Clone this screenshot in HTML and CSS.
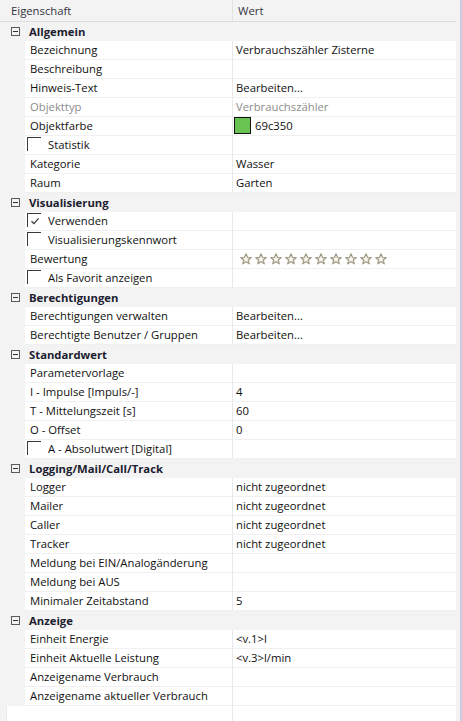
FILE: index.html
```html
<!DOCTYPE html>
<html lang="de">
<head>
<meta charset="utf-8">
<title>Eigenschaften</title>
<link rel="stylesheet" href="styles.css">
</head>
<body>
<svg width="0" height="0" class="defs">
  <defs>
    <linearGradient id="sg" x1="0" y1="0" x2="0" y2="1">
      <stop offset="0" stop-color="#f2efe6"/>
      <stop offset="1" stop-color="#cfc8b4"/>
    </linearGradient>
    <symbol id="star" viewBox="0 0 12 12">
      <polygon points="6,0.7 7.5,4.2 11.3,4.5 8.4,7 9.3,10.9 6,8.9 2.7,10.9 3.6,7 0.7,4.5 4.5,4.2" fill="url(#sg)" stroke="#9d9783" stroke-width="1.1" stroke-linejoin="round"/>
      <polygon points="6,3.6 6.8,5.4 8.6,5.6 7.2,6.8 7.7,8.6 6,7.6 4.3,8.6 4.8,6.8 3.4,5.6 5.2,5.4" fill="#fbfaf6"/>
    </symbol>
  </defs>
</svg>
<div class="window">
  <div class="panel">
    <div class="head">
      <div class="hcell hname">Eigenschaft</div>
      <div class="hcell hval">Wert</div>
    </div>

    <div class="cat"><span class="tog"></span><span class="ctext">Allgemein</span></div>
    <div class="row"><div class="gut"></div><div class="lab">Bezeichnung</div><div class="val">Verbrauchszähler Zisterne</div></div>
    <div class="row"><div class="gut"></div><div class="lab">Beschreibung</div><div class="val"></div></div>
    <div class="row"><div class="gut"></div><div class="lab">Hinweis-Text</div><div class="val">Bearbeiten...</div></div>
    <div class="row dis"><div class="gut"></div><div class="lab">Objekttyp</div><div class="val">Verbrauchszähler</div></div>
    <div class="row"><div class="gut"></div><div class="lab">Objektfarbe</div><div class="val"><span class="swatch"></span>69c350</div></div>
    <div class="row"><div class="gut"></div><div class="lab chk"><span class="box"></span>Statistik</div><div class="val"></div></div>
    <div class="row"><div class="gut"></div><div class="lab">Kategorie</div><div class="val">Wasser</div></div>
    <div class="row"><div class="gut"></div><div class="lab">Raum</div><div class="val">Garten</div></div>

    <div class="cat"><span class="tog"></span><span class="ctext">Visualisierung</span></div>
    <div class="row"><div class="gut"></div><div class="lab chk"><span class="box on"><svg viewBox="0 0 10 10" width="10" height="10"><path d="M1.5 5.2 L4 7.6 L8.6 2.4" fill="none" stroke="#333" stroke-width="1.2"/></svg></span>Verwenden</div><div class="val"></div></div>
    <div class="row"><div class="gut"></div><div class="lab chk"><span class="box"></span>Visualisierungskennwort</div><div class="val"></div></div>
    <div class="row"><div class="gut"></div><div class="lab">Bewertung</div><div class="val stars">
      <svg class="star"><use href="#star"/></svg><svg class="star"><use href="#star"/></svg><svg class="star"><use href="#star"/></svg><svg class="star"><use href="#star"/></svg><svg class="star"><use href="#star"/></svg><svg class="star"><use href="#star"/></svg><svg class="star"><use href="#star"/></svg><svg class="star"><use href="#star"/></svg><svg class="star"><use href="#star"/></svg><svg class="star"><use href="#star"/></svg>
    </div></div>
    <div class="row"><div class="gut"></div><div class="lab chk"><span class="box"></span>Als Favorit anzeigen</div><div class="val"></div></div>

    <div class="cat"><span class="tog"></span><span class="ctext">Berechtigungen</span></div>
    <div class="row"><div class="gut"></div><div class="lab">Berechtigungen verwalten</div><div class="val">Bearbeiten...</div></div>
    <div class="row"><div class="gut"></div><div class="lab">Berechtigte Benutzer / Gruppen</div><div class="val">Bearbeiten...</div></div>

    <div class="cat"><span class="tog"></span><span class="ctext">Standardwert</span></div>
    <div class="row"><div class="gut"></div><div class="lab">Parametervorlage</div><div class="val"></div></div>
    <div class="row"><div class="gut"></div><div class="lab">I - Impulse [Impuls/-]</div><div class="val">4</div></div>
    <div class="row"><div class="gut"></div><div class="lab">T - Mittelungszeit [s]</div><div class="val">60</div></div>
    <div class="row"><div class="gut"></div><div class="lab">O - Offset</div><div class="val">0</div></div>
    <div class="row"><div class="gut"></div><div class="lab chk"><span class="box"></span>A - Absolutwert [Digital]</div><div class="val"></div></div>

    <div class="cat"><span class="tog"></span><span class="ctext">Logging/Mail/Call/Track</span></div>
    <div class="row"><div class="gut"></div><div class="lab">Logger</div><div class="val">nicht zugeordnet</div></div>
    <div class="row"><div class="gut"></div><div class="lab">Mailer</div><div class="val">nicht zugeordnet</div></div>
    <div class="row"><div class="gut"></div><div class="lab">Caller</div><div class="val">nicht zugeordnet</div></div>
    <div class="row"><div class="gut"></div><div class="lab">Tracker</div><div class="val">nicht zugeordnet</div></div>
    <div class="row"><div class="gut"></div><div class="lab">Meldung bei EIN/Analogänderung</div><div class="val"></div></div>
    <div class="row"><div class="gut"></div><div class="lab">Meldung bei AUS</div><div class="val"></div></div>
    <div class="row"><div class="gut"></div><div class="lab">Minimaler Zeitabstand</div><div class="val">5</div></div>

    <div class="cat"><span class="tog"></span><span class="ctext">Anzeige</span></div>
    <div class="row"><div class="gut"></div><div class="lab">Einheit Energie</div><div class="val">&lt;v.1&gt;l</div></div>
    <div class="row"><div class="gut"></div><div class="lab">Einheit Aktuelle Leistung</div><div class="val">&lt;v.3&gt;l/min</div></div>
    <div class="row"><div class="gut"></div><div class="lab">Anzeigename Verbrauch</div><div class="val"></div></div>
    <div class="row"><div class="gut"></div><div class="lab">Anzeigename aktueller Verbrauch</div><div class="val"></div></div>

    <div class="filler"><div class="flab"></div><div class="fval"></div></div>
  </div>
  <div class="edge"></div>
</div>
</body>
</html>
```
FILE: styles.css
```css
* { box-sizing: border-box; }
html, body { margin: 0; padding: 0; }
body {
  background: #f3f3f3;
  font-family: "Open Sans", "Noto Sans", sans-serif;
  font-size: 11.3px;
  color: #101010;
}
.defs { position: absolute; }
.window {
  width: 462px;
  height: 721px;
  display: flex;
  background: #f3f3f3;
}
.panel {
  width: 456px;
  display: flex;
  flex-direction: column;
}
.edge {
  margin-left: 4px;
  width: 2px;
  background: #c9cce0;
}
.head {
  height: 22px;
  display: flex;
  border-bottom: 1px solid #dcdcdc;
  color: #333344;
}
.hcell { line-height: 21px; }
.hname { width: 233px; padding-left: 11px; border-right: 1px solid #e2e2e2; }
.hval { padding-left: 5px; }

.cat {
  height: 19px;
  display: flex;
  align-items: center;
  background: #f3f3f3;
}
.tog {
  width: 9px;
  height: 9px;
  margin-left: 11px;
  margin-right: 9px;
  border: 1px solid #5a5a5a;
  position: relative;
}
.tog::after {
  content: "";
  position: absolute;
  left: 1px;
  right: 1px;
  top: 3px;
  height: 1px;
  background: #333;
}
.ctext {
  font-weight: 700;
  color: #1c1c30;
  line-height: 18px;
}

.row {
  height: 19px;
  display: flex;
}
.gut { width: 25px; background: #f3f3f3; }
.lab {
  width: 208px;
  background: #fff;
  border-right: 1px solid #e8e8e8;
  border-bottom: 1px solid #f0f0f0;
  padding-left: 5px;
  line-height: 18px;
  white-space: nowrap;
  overflow: hidden;
  display: flex;
  align-items: center;
}
.val {
  flex: 1;
  background: #fff;
  border-bottom: 1px solid #f0f0f0;
  padding-left: 3px;
  line-height: 18px;
  white-space: nowrap;
  display: flex;
  align-items: center;
}
.dis .lab, .dis .val { color: #8c8c8c; }

.chk { padding-left: 2px; }
.box {
  width: 14px;
  height: 14px;
  flex: none;
  border-top: 1px solid #3a3a3a;
  border-left: 1px solid #3a3a3a;
  margin-right: 7px;
  margin-top: -2px;
  display: flex;
  align-items: center;
  justify-content: center;
}

.swatch {
  width: 17px;
  height: 17px;
  margin-left: -2px;
  margin-right: 4px;
  margin-top: -1px;
  border: 1px solid #111;
  background: #69c350;
  flex: none;
}

.stars { padding-left: 7px; gap: 3px; }
.star { width: 12px; height: 12px; flex: none; }

.filler {
  flex: 1;
  display: flex;
  margin-left: 6px;
  background: #fff;
  border-left: 1px solid #e9e9e9;
}
.flab { width: 226px; border-right: 1px solid #e8e8e8; }
```
